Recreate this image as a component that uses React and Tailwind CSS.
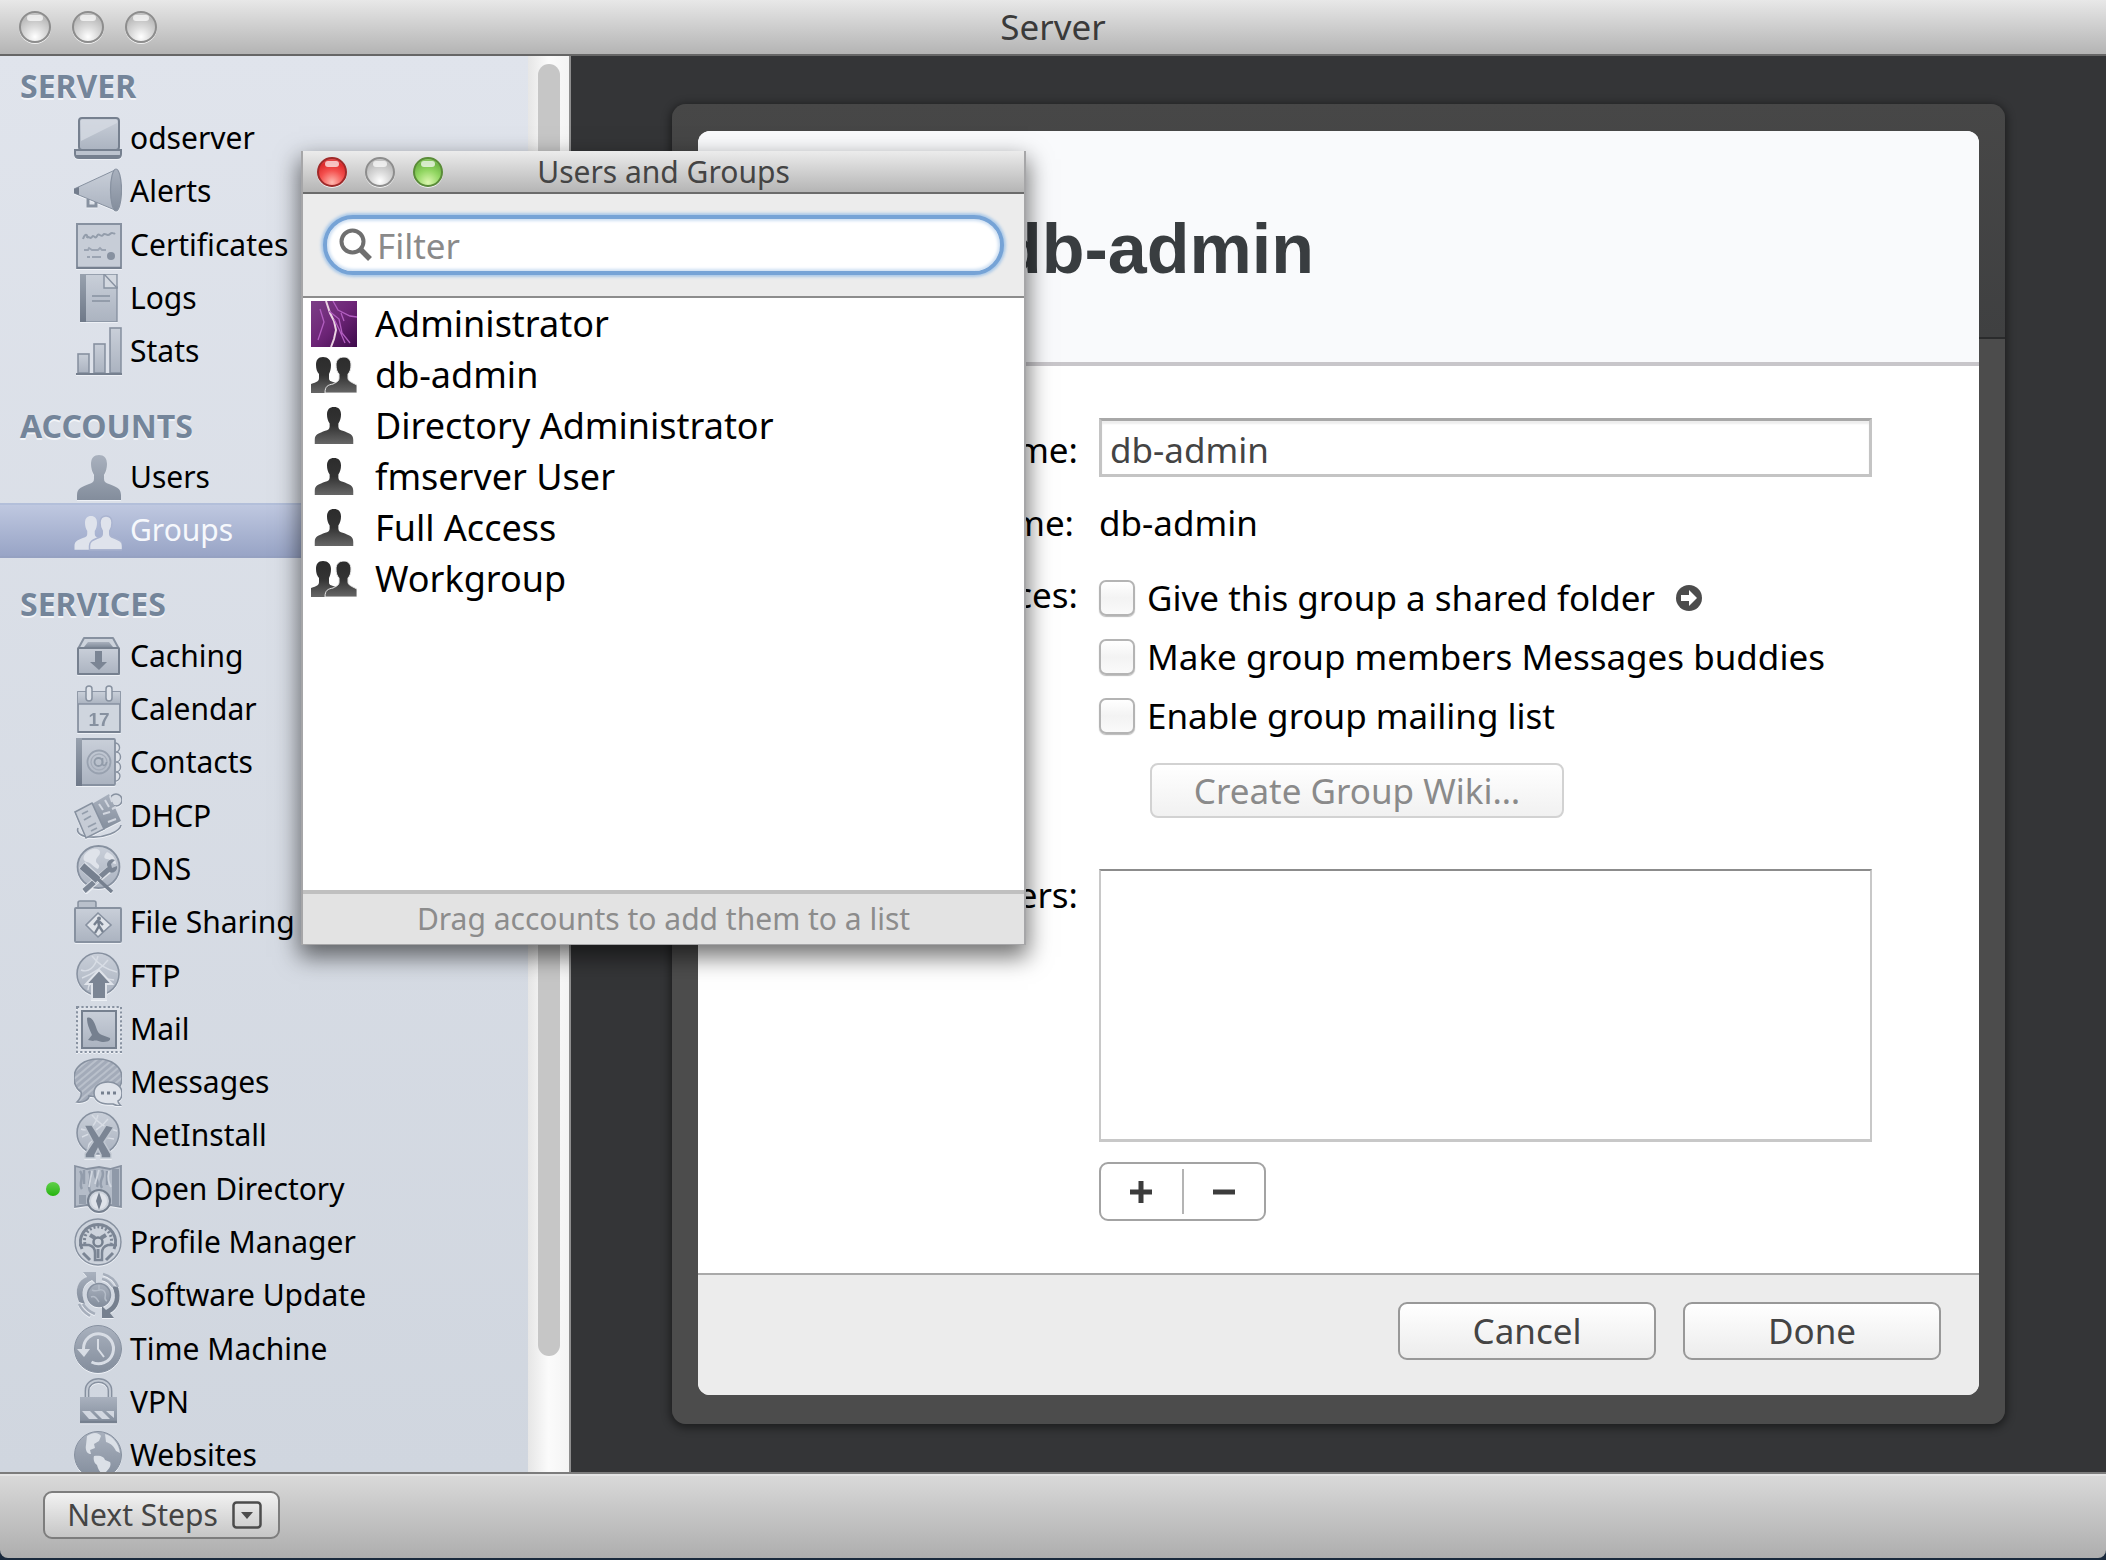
import React from "react";

const font = "font-['Noto_Sans','Open_Sans',sans-serif]";

function Svg({ children, className = "size-12" }) {
  return (
    <svg viewBox="0 0 48 48" className={`${className} shrink-0 drop-shadow-[0_1px_0_#eef1f6]`} aria-hidden="true">
      {children}
    </svg>
  );
}

const F = "url(#metal)";
const L = "url(#metalLight)";
const S = "#8791a0";

function Defs() {
  return (
    <svg className="absolute size-0" aria-hidden="true">
      <defs>
        <linearGradient id="metal" x1="0" y1="0" x2="0" y2="1">
          <stop offset="0" stopColor="#a9b1be" />
          <stop offset="1" stopColor="#838d9c" />
        </linearGradient>
        <linearGradient id="metalLight" x1="0" y1="0" x2="0" y2="1">
          <stop offset="0" stopColor="#c9cfd9" />
          <stop offset="1" stopColor="#abb3c0" />
        </linearGradient>
        <linearGradient id="spine" x1="0" y1="0" x2="0" y2="1">
          <stop offset="0" stopColor="#98a1ae" />
          <stop offset="1" stopColor="#6f7989" />
        </linearGradient>
        <linearGradient id="person" x1="0" y1="0" x2="0" y2="1">
          <stop offset="0" stopColor="#2c2c2c" />
          <stop offset="0.5" stopColor="#333" />
          <stop offset="1" stopColor="#666" />
        </linearGradient>
        <linearGradient id="storm" x1="0" y1="0" x2="1" y2="1">
          <stop offset="0" stopColor="#7c3f87" />
          <stop offset="0.5" stopColor="#6d2577" />
          <stop offset="1" stopColor="#3d0a4a" />
        </linearGradient>
        <pattern id="hatch" width="5" height="5" patternUnits="userSpaceOnUse" patternTransform="rotate(50)">
          <rect width="5" height="5" fill="#a3abb9" />
          <rect width="2" height="5" fill="#b9c0cb" />
        </pattern>
      </defs>
    </svg>
  );
}

const userPath =
  "M24 0c-5 0-8 3-8 9 0 4 1 8 3 11v4c0 3-2 4-5 5C7 32 2 33 2 40v5h44v-5c0-7-5-8-12-11-3-1-5-2-5-5v-4c2-3 3-7 3-11 0-6-3-9-8-9z";

const globe = (
  <>
    <circle cx="24" cy="22" r="21" fill={L} stroke={S} strokeWidth="1.6" />
    <path d="M7 18c7 3 14-2 17-14M14 38c0-10 12-13 26-10M8 26c10-4 20-10 26-18M18 4c6 8 16 14 25 16" fill="none" stroke="#d8dde5" strokeWidth="1.4" />
  </>
);

const icons = {
  laptop: (
    <>
      <rect x="5" y="4" width="40" height="32" rx="3" fill={L} stroke="#76808f" strokeWidth="2" />
      <path d="M7 27 43 9V6H7z" fill="#d5dae2" opacity=".8" />
      <path d="M1 36h46v4c0 3-2 4-4 4H5c-3 0-4-1-4-4z" fill="#bcc3ce" stroke="#76808f" strokeWidth="2" />
      <path d="M2 42h44" stroke="#76808f" strokeWidth="2" />
    </>
  ),
  horn: (
    <>
      <path d="M0 22 41 3v40L0 26z" fill={L} stroke={S} strokeWidth="1" />
      <path d="M14 32v7h8v-4" fill="none" stroke={S} strokeWidth="3" />
      <ellipse cx="42" cy="23" rx="5.5" ry="21" fill={F} stroke={S} strokeWidth="1.2" />
      <path d="M0 22l5-2v8l-5-2z" fill="#737d8d" />
    </>
  ),
  certificate: (
    <>
      <rect x="3" y="3" width="44" height="44" fill="#c7cdd7" stroke={S} strokeWidth="2" />
      <path d="M9 18c2-6 5-5 4-1 2-3 3 2 5-1s3 3 5-1 4 2 6-1 4 2 7-1 3 1 5-1" fill="none" stroke="#939dab" strokeWidth="2" />
      <path d="M10 29h4l1-2 3 2h6l2-2 2 2h4M13 36h3M18 36h9" fill="none" stroke="#9ba4b2" strokeWidth="1.8" />
      <circle cx="37" cy="35" r="4" fill="#8791a0" />
      <path d="M3 47h44" stroke="#76808f" strokeWidth="2.4" />
    </>
  ),
  logs: (
    <>
      <path d="M7 0h24l12 13v35H7z" fill={L} stroke={S} strokeWidth="1.4" />
      <rect x="6" y="0" width="6" height="48" fill="url(#spine)" />
      <path d="M30 0h13v14H30z" fill="#d3d8e0" stroke={S} strokeWidth="1.4" />
      <path d="M30 0l13 14" stroke={S} strokeWidth="1.4" />
      <path d="M18 22h18M18 27h18" stroke="#8791a0" strokeWidth="1.6" />
    </>
  ),
  stats: (
    <>
      <g fill={L} stroke={S} strokeWidth="1.6">
        <rect x="4" y="27" width="11" height="19" />
        <rect x="20" y="17" width="11" height="29" />
        <rect x="36" y="1" width="11" height="45" />
      </g>
      <path d="M2 47h46" stroke="#76808f" strokeWidth="1.8" />
    </>
  ),
  user: <path d={userPath} transform="translate(1 2)" fill={F} />,
  groups: (
    <g fill="#dfe3ec">
      <path transform="translate(-1 10) scale(.75)" d={userPath} />
      <path transform="translate(14 10) scale(.75)" d={userPath} stroke="#aab4d0" strokeWidth="2" />
    </g>
  ),
  caching: (
    <>
      <path d="M4 17 10 6h29l6 11v25H4z" fill="#cdd3dc" stroke={S} strokeWidth="2" strokeLinejoin="round" />
      <path d="M10 15l4-5h21l4 5z" fill={F} />
      <rect x="4" y="16" width="41" height="26" rx="1" fill={L} stroke="#76808f" strokeWidth="2" />
      <path d="M21 19h7v11h5l-8 8-9-8h5z" fill="#7b8594" />
    </>
  ),
  calendar: (
    <>
      <rect x="4" y="7" width="42" height="40" fill="#cfd5de" stroke={S} strokeWidth="1.8" />
      <rect x="4" y="7" width="42" height="12" fill={L} />
      <path d="M4 19h42" stroke={S} strokeWidth="1.6" />
      <rect x="12" y="1" width="6" height="15" rx="3" fill="#dfe3ea" stroke={S} strokeWidth="1.5" />
      <rect x="32" y="1" width="6" height="15" rx="3" fill="#dfe3ea" stroke={S} strokeWidth="1.5" />
      <text x="25" y="41" textAnchor="middle" fontFamily="Liberation Sans" fontWeight="700" fontSize="19" fill="#8791a0">17</text>
      <path d="M4 47h42" stroke="#76808f" strokeWidth="2" />
    </>
  ),
  contacts: (
    <>
      <path d="M40 5c7-1 7 9 2 9 6 0 6 10 0 10 6 0 6 10 0 10 6 0 5 10-2 9" fill="#dde1e8" stroke={S} strokeWidth="1.4" />
      <rect x="3" y="1" width="38" height="46" rx="1" fill={L} stroke={S} strokeWidth="1.8" />
      <rect x="2" y="0" width="6" height="48" fill="url(#spine)" />
      <circle cx="25" cy="24" r="11.5" fill="none" stroke="#98a1af" strokeWidth="1.8" />
      <circle cx="25" cy="24" r="8" fill="none" stroke="#a4acb9" strokeWidth="1.3" />
      <circle cx="24.500" cy="24" r="4" fill="none" stroke="#919ba9" strokeWidth="1.8" />
      <path d="M28.500 20v6c1 3 4 1 4-2" fill="none" stroke="#919ba9" strokeWidth="1.6" />
    </>
  ),
  dhcp: (
    <>
      <circle cx="42" cy="8" r="6" fill="#d5dae2" stroke={S} strokeWidth="1.5" />
      <path d="M4 36c-2 5 4 9 12 9 14 1 30-5 31-12" fill="none" stroke={S} strokeWidth="1.6" />
      <path d="M18 12 35 2l12 27-20 10z" fill={F} />
      <path d="M25 12l4 6M31 8l4 7M36 4l2 6M29 22l7-2M34 30l8-3M38 17l4-2" stroke="#d2d7e0" strokeWidth="2" />
      <path d="M1 20 18 11 30 37 12 46z" fill="#c6ccd6" stroke={S} strokeWidth="1.6" />
      <path d="M8 22l6-3M10 28l7-4M14 35l8-4M17 39l6-3" stroke="#949eac" strokeWidth="1.8" />
    </>
  ),
  dns: (
    <>
      <circle cx="24.500" cy="22" r="21" fill={L} stroke={S} strokeWidth="1.8" />
      <path d="M12 8c6-6 14-5 14-1s-3 4-4 8 6 4 2 9c-5-2-6-6-11-7s-4-6-1-9zM33 7c6 2 9 8 9 12-5 0-5-5-9-5s-3-4 0-7z" fill="#dfe3ea" />
      <path d="M10 46 36 24" stroke="#e0e4ea" strokeWidth="7" />
      <path d="M10 46 35 24" stroke="#7b8594" strokeWidth="5" />
      <path d="M33 20c0-4 4-7 8-5l-4 4 1 4 5-2c1 5-4 8-8 6z" fill="#7b8594" />
      <path d="M8 20 25 36" stroke="#d8dde5" strokeWidth="9" />
      <path d="M8 21 24 35" stroke="#76808f" strokeWidth="7" />
      <path d="M24 34 38 47" stroke="#76808f" strokeWidth="3.500" />
    </>
  ),
  folder: (
    <>
      <path d="M4 11V5c0-1 1-2 2-2h14c1 0 2 1 2 2v6z" fill="#b9c0cb" stroke={S} strokeWidth="1.6" />
      <rect x="1" y="10" width="46" height="34" rx="1" fill={L} stroke={S} strokeWidth="2" />
      <path d="M24 15 37 27 24 39 12 27z" fill="#e0e4ea" stroke={S} strokeWidth="1.6" />
      <circle cx="25" cy="20.500" r="2" fill="#76808f" />
      <path d="M24 22l-4 5M24 22l1 6-4 7M25 28l4 6M25 23l4 4" stroke="#76808f" strokeWidth="2.400" fill="none" />
    </>
  ),
  ftp: (
    <>
      {globe}
      <path d="M25 18 38 32h-6v15H18V32h-6z" fill="#7b8594" stroke="#dfe3ea" strokeWidth="2" />
    </>
  ),
  mail: (
    <>
      <rect x="3" y="2" width="44" height="45" fill="#dfe3ea" stroke={S} strokeWidth="2" strokeDasharray="2.200 2.200" />
      <rect x="8" y="6" width="34" height="37" fill={L} stroke="#76808f" strokeWidth="2" />
      <path d="M13 13c4-2 7 3 9 9 1 4 3 7 6 8l8 3c1 3-3 4-8 4-4-1-6-2-9-1l-5-1 4-5c-2-5-5-10-5-17z" fill="#76808f" />
    </>
  ),
  messages: (
    <>
      <path d="M24 1c14 0 24 8 24 19S38 39 24 39l-9-1c0 4-6 7-12 6 3-3 5-6 4-10C3 31 0 26 0 20 0 9 10 1 24 1z" fill="url(#hatch)" stroke={S} strokeWidth="1.600" />
      <path d="M34 24c8 0 14 5 14 11 0 4-2 7-4 8 0 2 1 3 3 5-4 0-6-1-8-2h-5c-8 0-14-4-14-11s6-11 14-11z" fill="#dfe3ea" stroke={S} strokeWidth="1.600" />
      <path d="M27 35h3M33 35h3M39 35h3" stroke="#76808f" strokeWidth="3" />
    </>
  ),
  netinstall: (
    <>
      {globe}
      <path d="M10 14l8 0 7 11 7-11 8 2-10 15 7 12v4H27v-3l-3-6-3 6v3H11v-4l8-12z" fill="#7b8594" stroke="#c0c7d1" strokeWidth="1.500" />
    </>
  ),
  directory: (
    <>
      <path d="M1 1l12 3 12-2 11 2 11-3v41l-11-2-11 2-12-2-12 2z" fill="#b4bcc8" stroke={S} strokeWidth="1.800" />
      <path d="M6 6c5 6-2 12 2 18M10 5v14M15 6c5 8-4 14 2 22M21 5c-2 8 5 10 2 17M28 5c4 8-5 10 0 18M33 6v14" stroke="#929cab" strokeWidth="2.500" fill="none" />
      <path d="M38 4h7v37h-7z" fill="#8f99a8" />
      <path d="M5 30h7v9H5z" fill="#939dab" />
      <path d="M18 6l-3 16M25 5l-4 14M35 6c-2 8 0 12 2 16" stroke="#d0d6df" strokeWidth="1.800" fill="none" />
      <circle cx="25" cy="36" r="11" fill="#cdd3dc" stroke="#76808f" strokeWidth="2" />
      <circle cx="25" cy="36" r="8" fill="#dfe3ea" />
      <path d="M25 27l3 9-3 9-3-9z" fill="#76808f" />
    </>
  ),
  profile: (
    <>
      <circle cx="24" cy="24" r="23" fill="#cdd3dc" stroke={S} strokeWidth="1.500" />
      <path d="M8 31a17.500 17.500 0 1 1 32 0" fill="none" stroke="#7b8594" strokeWidth="3" />
      <path d="M11 26a13.500 13.500 0 1 1 26 0" fill="none" stroke="#7b8594" strokeWidth="3" strokeDasharray="2 2" />
      <circle cx="24" cy="24" r="4.500" fill="none" stroke="#76808f" strokeWidth="2.500" />
      <path d="M16 17l5 3M32 17l-5 3" stroke="#7b8594" strokeWidth="4" />
      <path d="M5 27h10c4 1 6 4 6 8v7h7v-7c0-4 2-7 6-8h9" fill="none" stroke="#7b8594" strokeWidth="2.500" />
      <path d="M24 31v9" stroke="#7b8594" strokeWidth="3" />
      <path d="M9 35l7 7M39 35l-7 7" stroke="#7b8594" strokeWidth="3" />
    </>
  ),
  update: (
    <>
      <path d="M5 31C0 19 4 9 13 6L9 1h13v12l-4-4C9 13 6 21 11 33z" fill={F} />
      <path d="M44 16c4 12 0 22-8 26l4 5H28V35l4 4c8-4 12-12 6-24z" fill="#76808f" />
      <path d="M29 3c8 2 12 6 15 13M28 8c6 1 8 4 11 8M9 33c3 5 7 8 12 10M5 33c2 5 6 9 11 12" fill="none" stroke="#a6aebb" strokeWidth="2.500" />
      <circle cx="25" cy="24" r="11.500" fill={F} stroke={S} strokeWidth="1.500" />
      <path d="M18 19c6 3 8-3 12 1s-2 8 3 10M17 26c4-2 6 2 8 5M25 14v6" stroke="#b4bcc8" strokeWidth="1.500" fill="none" />
    </>
  ),
  time: (
    <>
      <circle cx="24" cy="24" r="23.500" fill={F} stroke="#8791a0" strokeWidth="1" />
      <path d="M9.500 24a15 15 0 1 1 8 13" fill="none" stroke="#d8dde5" strokeWidth="3" />
      <path d="M3 24h13l-6 8z" fill="#d8dde5" />
      <path d="M24 14v10l6 8" fill="none" stroke="#d8dde5" strokeWidth="2" />
    </>
  ),
  lock: (
    <>
      <path d="M13 21v-8c0-14 23-14 23 0v8" fill="none" stroke="#8791a0" strokeWidth="5" />
      <path d="M13 21v-8c0-14 23-14 23 0v8" fill="none" stroke="#c3cad4" strokeWidth="2" />
      <rect x="6" y="19" width="37" height="26" fill={F} />
      <path d="M8 33h8l8 8h-9zM20 33h8l8 8h-8zM32 33h8v7z" fill="#d2d7e0" />
      <path d="M6 44h37" stroke="#76808f" strokeWidth="2.500" />
    </>
  ),
  web: (
    <>
      <circle cx="24" cy="24" r="23.500" fill={F} stroke="#8791a0" strokeWidth="1" />
      <path d="M13 5c7-5 12-3 14 0l-2 5-5 3 1 4-5 2 1 4c-4 0-6-4-5-9zM31 3c8 2 14 10 15 19l-4-2c-2-5-6-8-10-9zM20 25c7-1 10 1 11 4l5 2c2 4-2 8-6 12-5-1-6-6-7-9-3-2-4-6-3-9z" fill="#dbe0e7" />
    </>
  ),
};

const sections = [
  {
    title: "SERVER",
    head: "h-[55px]",
    list: "h-[267px]",
    items: [
      ["odserver", "laptop"],
      ["Alerts", "horn"],
      ["Certificates", "certificate"],
      ["Logs", "logs"],
      ["Stats", "stats"],
    ],
  },
  {
    title: "ACCOUNTS",
    head: "h-[73px]",
    list: "h-[107px]",
    items: [
      ["Users", "user"],
      ["Groups", "groups"],
    ],
  },
  {
    title: "SERVICES",
    head: "h-[71px]",
    list: "h-[853px]",
    items: [
      ["Caching", "caching"],
      ["Calendar", "calendar"],
      ["Contacts", "contacts"],
      ["DHCP", "dhcp"],
      ["DNS", "dns"],
      ["File Sharing", "folder"],
      ["FTP", "ftp"],
      ["Mail", "mail"],
      ["Messages", "messages"],
      ["NetInstall", "netinstall"],
      ["Open Directory", "directory"],
      ["Profile Manager", "profile"],
      ["Software Update", "update"],
      ["Time Machine", "time"],
      ["VPN", "lock"],
      ["Websites", "web"],
    ],
  },
];

function Sidebar() {
  return (
    <aside className="flex w-[571px] shrink-0 overflow-hidden border-r-2 border-[#8e8e8e]">
      <nav className="min-w-0 flex-1 bg-linear-to-b from-[#e0e4ec] to-[#d0d6df]">
        {sections.map((s) => (
          <section key={s.title}>
            <h2 className={`${s.head} flex items-end pb-1 pl-5 text-[32px] leading-[42px] font-bold text-[#74859a] [text-shadow:0_2px_0_#f2f4f8]`}>
              {s.title}
            </h2>
            <ul className={`${s.list} flex flex-col`}>
              {s.items.map(([label, icon]) => {
                const on = label === "Groups";
                return (
                  <li
                    key={label}
                    className={
                      on
                        ? "flex min-h-0 flex-1 border-y-2 border-t-[#b3bfda] border-b-[#95a1c1] bg-linear-to-b from-[#bfc8e0] to-[#98a4c6] text-[#f6f8fc]"
                        : "flex min-h-0 flex-1 text-black"
                    }
                  >
                    <a href="#" className="flex flex-1 items-center text-[30px] leading-8">
                      <span className="flex w-[74px] shrink-0 justify-end pr-3.5">
                        {label === "Open Directory" && (
                          <span className="size-[14px] rounded-full bg-linear-to-b from-[#5fd048] to-[#22b404]" />
                        )}
                      </span>
                      {on ? (
                        <svg viewBox="0 0 48 48" className="size-12 shrink-0" aria-hidden="true">{icons.groups}</svg>
                      ) : (
                        <Svg>{icons[icon]}</Svg>
                      )}
                      <span className="pl-2">{label}</span>
                    </a>
                  </li>
                );
              })}
            </ul>
          </section>
        ))}
      </nav>
      <div className="flex w-[41px] shrink-0 justify-center bg-linear-to-r from-[#e6e6e6] via-[#fbfbfb] to-[#f4f4f4] pt-2">
        <div className="h-[1292px] w-[22px] rounded-full bg-[#c6c6c6]" />
      </div>
    </aside>
  );
}

const light = {
  gray: "border-[#8d8d8d] bg-[radial-gradient(circle_at_50%_85%,#ffffff_0,#dcdcdc_35%,#b9b9b9_75%,#e0e0e0_100%)]",
  red: "border-[#a02a2a] bg-[radial-gradient(circle_at_50%_90%,#ffb9b0_0,#f4504e_45%,#dd2b2c_75%,#f08080_100%)]",
  green: "border-[#5a8c38] bg-[radial-gradient(circle_at_50%_90%,#dcf7b0_0,#93d763_45%,#6fb645_75%,#b8e598_100%)]",
};

function Light({ color, size, label }) {
  return (
    <button type="button" aria-label={label} className={`${light[color]} ${size} relative overflow-hidden rounded-full border-2 shadow-[0_1px_0_#f0f0f0]`}>
      <span className="absolute inset-x-1.5 top-0.5 h-1.5 rounded-full bg-white/70" />
    </button>
  );
}

const accounts = [
  ["Administrator", "photo"],
  ["db-admin", "group"],
  ["Directory Administrator", "user"],
  ["fmserver User", "user"],
  ["Full Access", "user"],
  ["Workgroup", "group"],
];

function AccountIcon({ kind }) {
  if (kind === "photo")
    return (
      <svg viewBox="0 0 46 46" className="size-[46px]" aria-hidden="true">
        <rect width="46" height="46" fill="url(#storm)" />
        <path d="M15 0l4 12 4 8 2 9-2 9-3 8" fill="none" stroke="#ead3e2" strokeWidth="2" />
        <path d="M22 0l5 9 12 6 7 1M23 18l5 10 6 14M9 8l4 13-6 18M30 12l3 8M18 10l10 8 3 14 8 10" fill="none" stroke="#b25ec0" strokeWidth="1.300" />
      </svg>
    );
  if (kind === "group")
    return (
      <svg viewBox="0 0 46 36" className="h-[36px] w-[46px]" fill="url(#person)" aria-hidden="true">
        <path d="M12 0C7 0 5 3 5 8c0 4 1 7 3 9v4c0 3-2 4-8 6v9h25V26c-6-2-7-2-7-5v-4c1-2 2-5 2-9 0-5-3-8-8-8z" />
        <path d="M33 0c-5 0-8 3-8 8 0 4 1 7 3 9v4c0 3-2 4-6 6-5 1-8 2-8 9h32v-8c-6-3-9-4-9-7v-4c2-2 3-5 3-9 0-5-3-8-7-8z" stroke="#e8e8e8" strokeWidth="1" />
      </svg>
    );
  return (
    <svg viewBox="0 0 48 45" preserveAspectRatio="none" className="h-[37px] w-[42px]" aria-hidden="true">
      <path d={userPath} fill="url(#person)" />
    </svg>
  );
}

function UsersPanel() {
  return (
    <section
      aria-label="Users and Groups"
      className="absolute top-[151px] left-[301px] flex h-[794px] w-[725px] flex-col border-x-2 border-b border-[#a6a6a8] bg-white shadow-[0_10px_22px_2px_rgba(0,0,0,0.55)]"
    >
      <header className="grid h-[43px] grid-cols-[1fr_auto_1fr] items-center border-b-2 border-[#6b6b6b] bg-linear-to-b from-[#ececec] to-[#b5b5b5] px-3.5">
        <div className="flex gap-[18px]">
          <Light color="red" size="size-[30px]" label="Close" />
          <Light color="gray" size="size-[30px]" label="Minimize" />
          <Light color="green" size="size-[30px]" label="Zoom" />
        </div>
        <h2 className="text-[30px] leading-[40px] text-[#444]">Users and Groups</h2>
      </header>
      <div className="flex h-[104px] items-center border-b-2 border-[#8c8c8c] bg-[#ececec] px-5">
        <label className="flex h-[60px] w-full items-center gap-1 rounded-full border-4 border-[#76a3d6] bg-white pl-3 shadow-[0_0_3px_2px_#a9c8e8,inset_0_0_3px_2px_#cfe0f3]">
          <svg viewBox="0 0 34 34" className="size-[34px] shrink-0" fill="none" stroke="#6f6f6f" aria-hidden="true">
            <circle cx="13.500" cy="13.500" r="11" strokeWidth="4" />
            <path d="M21 21l10 10" strokeWidth="5.500" />
          </svg>
          <input type="text" aria-label="Filter" placeholder="Filter" className="min-w-0 flex-1 bg-transparent pt-0.5 text-[35px] leading-[44px] outline-none placeholder:text-[#8a8a8a]" />
        </label>
      </div>
      <ul className="flex-1">
        {accounts.map(([name, kind]) => (
          <li key={name} className="flex h-[51px] items-center text-[36px] leading-[50px] text-black">
            <span className="flex w-[62px] justify-center">
              <AccountIcon kind={kind} />
            </span>
            <span className="pl-2.5">{name}</span>
          </li>
        ))}
      </ul>
      <footer className="flex h-[54px] items-center justify-center border-t-4 border-[#c0c0c0] bg-[#e3e3e3] text-[30px] leading-[40px] text-[#8c8c8c]">
        Drag accounts to add them to a list
      </footer>
    </section>
  );
}

function Check({ id, children, extra }) {
  return (
    <div className="flex h-[59px] items-center">
      <input
        id={id}
        type="checkbox"
        className="size-9 shrink-0 appearance-none rounded-[7px] border-2 border-[#b4b4b4] bg-linear-to-b from-white via-[#f3f3f3] to-[#fafafa] shadow-[0_1px_1px_#bbb]"
      />
      <label htmlFor={id} className="pl-3">
        {children}
      </label>
      {extra}
    </div>
  );
}

const pushButton =
  "h-[58px] w-[258px] rounded-[9px] border-2 border-[#989898] bg-linear-to-b from-white to-[#ececec] text-[#444]";

function Sheet() {
  return (
    <div className="flex flex-1 flex-col rounded-[14px] bg-[linear-gradient(#474747_0,#3f4041_233px,#2a2b2c_233px,#2a2b2c_235px,#4c4c4c_235px)] p-[26px] pt-[27px] pb-[29px] shadow-[0_2px_8px_2px_rgba(0,0,0,0.45)]">
      <div className="flex flex-1 flex-col overflow-hidden rounded-[12px] bg-white text-[35px] leading-[48px]">
        <header className="flex h-[235px] items-center gap-10 border-b-4 border-[#c8c6ca] bg-[#f9fafc] pt-1 pl-[101px]">
          <svg viewBox="0 0 46 36" className="h-[120px] w-[160px]" fill="url(#person)" aria-hidden="true">
            <path d="M12 0C7 0 5 3 5 8c0 4 1 7 3 9v4c0 3-2 4-8 6v9h25V26c-6-2-7-2-7-5v-4c1-2 2-5 2-9 0-5-3-8-8-8z" />
          </svg>
          <h1 className="font-['Liberation_Sans',Arial,sans-serif] text-[70px] leading-[80px] font-bold text-[#393d40]">db-admin</h1>
        </header>
        <form className="grid flex-1 grid-cols-[380px_1fr] content-start gap-x-[21px] pt-[52px] pr-[107px]" onSubmit={(e) => e.preventDefault()}>
          <label htmlFor="full" className="flex h-[64px] items-center justify-end">Full Name:</label>
          <input
            id="full"
            type="text"
            defaultValue="db-admin"
            className="h-[59px] w-full min-w-0 border-[3px] border-[#c4c4c4] border-t-[#a8a8a8] bg-white px-2 pt-1 text-[#444] shadow-[inset_0_3px_2px_#eeeeee] outline-none"
          />
          <span className="-mt-[5px] flex h-[91px] items-center justify-end pr-1">Account Name:</span>
          <span className="-mt-[5px] flex h-[91px] items-center">db-admin</span>
          <span id="svc" className="flex h-[54px] items-center justify-end">Group Services:</span>
          <div role="group" aria-labelledby="svc">
            <Check
              id="folder"
              extra={
                <button type="button" aria-label="Open shared folder" className="ml-5">
                  <svg viewBox="0 0 28 28" className="size-7" aria-hidden="true">
                    <circle cx="14" cy="14" r="13" fill="#4c4c4c" />
                    <path d="M6 11h8V6l8 8-8 8v-5H6z" fill="#fff" />
                  </svg>
                </button>
              }
            >
              Give this group a shared folder
            </Check>
            <Check id="buddies">Make group members Messages buddies</Check>
            <Check id="mailing">Enable group mailing list</Check>
            <button type="button" disabled className="mt-[18px] ml-[51px] block h-[55px] w-[414px] rounded-[8px] border-2 border-[#d2d2d2] bg-linear-to-b from-white to-[#f1f1f1] text-[#8a8a8a]">
              Create Group Wiki…
            </button>
          </div>
          <span id="mem" className="mt-[51px] flex h-[51px] items-center justify-end">Members:</span>
          <div className="mt-[51px]">
            <ul aria-labelledby="mem" className="h-[273px] border-2 border-[#c8c8c8] border-t-[#8c8c8c] border-b-[3px] bg-white" />
            <div className="mt-5 flex h-[59px] w-[167px] items-center rounded-[9px] border-2 border-[#a3a3a3] bg-white">
              <button type="button" aria-label="Add" className="flex h-[45px] flex-1 items-center justify-center border-r-2 border-[#b4b4b4]">
                <svg viewBox="0 0 24 24" className="size-6" stroke="#3c3c3c" strokeWidth="5" aria-hidden="true"><path d="M1 12h22M12 1v22" /></svg>
              </button>
              <button type="button" aria-label="Remove" className="flex h-[45px] flex-1 items-center justify-center">
                <svg viewBox="0 0 24 24" className="size-6" stroke="#3c3c3c" strokeWidth="5" aria-hidden="true"><path d="M1 12h22" /></svg>
              </button>
            </div>
          </div>
        </form>
        <footer className="flex h-[122px] shrink-0 items-start justify-end gap-[27px] border-t-2 border-[#a9a9a9] bg-[#ececec] pt-[27px] pr-[38px]">
          <button type="button" className={pushButton}>Cancel</button>
          <button type="button" className={pushButton}>Done</button>
        </footer>
      </div>
    </div>
  );
}

export default function App() {
  return (
    <div className={`${font} relative flex min-h-screen flex-col bg-[#1a2a3d] pb-0.5`}>
      <Defs />
      <header className="grid h-14 shrink-0 grid-cols-[1fr_auto_1fr] items-center border-b-2 border-[#666] bg-linear-to-b from-[#e8e8e8] to-[#b4b4b4] px-[19px]">
        <div className="flex gap-[21px]">
          <Light color="gray" size="size-8" label="Close" />
          <Light color="gray" size="size-8" label="Minimize" />
          <Light color="gray" size="size-8" label="Zoom" />
        </div>
        <h1 className="text-[35px] leading-[48px] text-[#3a3a3a]">Server</h1>
      </header>
      <div className="flex h-[1416px] flex-auto">
        <Sidebar />
        <main className="flex min-w-0 flex-1 bg-[#343537] px-[101px] pt-[48px] pb-[48px]">
          <Sheet />
        </main>
      </div>
      <footer className="flex h-[86px] shrink-0 items-center rounded-b-[8px] border-t-2 border-[#7c7c7c] bg-linear-to-b from-[#dadada] to-[#aeaeae] pb-0.5 pl-[43px] shadow-[inset_0_2px_0_#e4e4e4]">
        <button type="button" className="flex h-12 w-[237px] items-center justify-center gap-3.5 rounded-[9px] border-2 border-[#7d7d7d] bg-linear-to-b from-[#f2f2f2] to-[#c6c6c6] pl-1.5 text-[30px] leading-[40px] text-[#444]">
          Next Steps
          <svg viewBox="0 0 30 28" className="h-7 w-[30px]" aria-hidden="true">
            <rect x="1.500" y="1.500" width="27" height="25" rx="3" fill="none" stroke="#4c4c4c" strokeWidth="2.500" />
            <path d="M9 11h12l-6 7z" fill="#4c4c4c" />
          </svg>
        </button>
      </footer>
      <UsersPanel />
    </div>
  );
}
